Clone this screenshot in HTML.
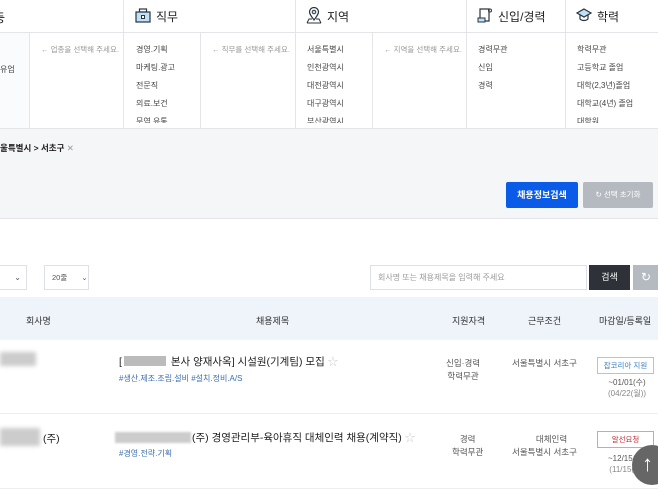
<!DOCTYPE html>
<html><head><meta charset="utf-8"><style>
*{margin:0;padding:0;box-sizing:border-box}
body{width:658px;height:493px;overflow:hidden;background:#fff;font-family:"Liberation Sans","Noto Sans CJK KR",sans-serif;color:#222;position:relative}
.a{position:absolute;white-space:nowrap}
.vl{position:absolute;width:1px;background:#e3e5e9}
.hl{position:absolute;height:1px;background:#e3e5e9}
.s{font-size:8px;color:#444}
.g{font-size:7.5px;color:#999}
.h{font-size:12px;color:#222}
.th{font-size:9px;color:#333}
.c{font-size:8.5px;color:#555;text-align:center}
.blur{position:absolute;background:#ccc;filter:blur(2px)}
.cut{height:7px;overflow:hidden}
</style></head><body>
<div class="hl" style="left:0;top:32px;width:658px"></div>
<div class="vl" style="left:123px;top:0;height:128px"></div>
<div class="vl" style="left:295px;top:0;height:128px"></div>
<div class="vl" style="left:466px;top:0;height:128px"></div>
<div class="vl" style="left:565px;top:0;height:128px"></div>
<div class="vl" style="left:29px;top:32px;height:96px"></div>
<div class="vl" style="left:200px;top:32px;height:96px"></div>
<div class="vl" style="left:372px;top:32px;height:96px"></div>
<div style="position:absolute;left:0;top:33px;width:29px;height:95px;background:#fafbfc"></div>
<div class="a h" style="left:-6px;top:9px">등</div>
<svg class="a" style="left:135px;top:8px" width="16" height="15" viewBox="0 0 16 15"><rect x="4.5" y="1" width="7" height="3" fill="none" stroke="#2a3340" stroke-width="1.2"/><rect x="1" y="4" width="14" height="10" fill="#bfe0f5" stroke="#2a3340" stroke-width="1.2"/><rect x="6.5" y="7.5" width="3" height="3" fill="#fff" stroke="#2a3340"/></svg>
<div class="a h" style="left:156px;top:8px">직무</div>
<svg class="a" style="left:306px;top:7px" width="16" height="17" viewBox="0 0 16 17"><path d="M8 13C5 9 3.5 7 3.5 5a4.5 4.5 0 0 1 9 0c0 2-1.5 4-4.5 8z" fill="none" stroke="#2a3340" stroke-width="1.2"/><circle cx="8" cy="5" r="1.8" fill="#bfe0f5" stroke="#2a3340"/><path d="M1 16l2-4h3M15 16l-2-4h-3M1 16h14" fill="none" stroke="#2a3340"/></svg>
<div class="a h" style="left:327px;top:8px">지역</div>
<svg class="a" style="left:477px;top:8px" width="16" height="15" viewBox="0 0 16 15"><path d="M3 1h9v12H3z" fill="#fff" stroke="#2a3340" stroke-width="1.2"/><path d="M1 10h7v4H1z" fill="#bfe0f5" stroke="#2a3340"/><circle cx="13" cy="2.5" r="1.5" fill="none" stroke="#2a3340"/></svg>
<div class="a h" style="left:498px;top:8px">신입/경력</div>
<svg class="a" style="left:576px;top:8px" width="16" height="15" viewBox="0 0 16 15"><path d="M8 1L15 5 8 9 1 5z" fill="#bfe0f5" stroke="#2a3340" stroke-width="1.2"/><path d="M4 7v4c2 2 6 2 8 0V7" fill="none" stroke="#2a3340" stroke-width="1.2"/></svg>
<div class="a h" style="left:597px;top:8px">학력</div>
<div class="a s" style="left:0;top:64px">유업</div>
<div class="a g" style="left:41px;top:44px">← 업종을 선택해 주세요.</div>
<div class="a s" style="left:136px;top:44px">경영.기획</div>
<div class="a s" style="left:136px;top:62px">마케팅.광고</div>
<div class="a s" style="left:136px;top:80px">전문직</div>
<div class="a s" style="left:136px;top:98px">의료.보건</div>
<div class="a s cut" style="left:136px;top:116px">무역.유통</div>
<div class="a g" style="left:212px;top:44px">← 직무를 선택해 주세요.</div>
<div class="a s" style="left:307px;top:44px">서울특별시</div>
<div class="a s" style="left:307px;top:62px">인천광역시</div>
<div class="a s" style="left:307px;top:80px">대전광역시</div>
<div class="a s" style="left:307px;top:98px">대구광역시</div>
<div class="a s cut" style="left:307px;top:116px">부산광역시</div>
<div class="a g" style="left:384px;top:44px">← 지역을 선택해 주세요.</div>
<div class="a s" style="left:478px;top:44px">경력무관</div>
<div class="a s" style="left:478px;top:62px">신입</div>
<div class="a s" style="left:478px;top:80px">경력</div>
<div class="a s" style="left:577px;top:44px">학력무관</div>
<div class="a s" style="left:577px;top:62px">고등학교 졸업</div>
<div class="a s" style="left:577px;top:80px">대학(2,3년)졸업</div>
<div class="a s" style="left:577px;top:98px">대학교(4년) 졸업</div>
<div class="a s cut" style="left:577px;top:116px">대학원</div>
<div style="position:absolute;left:0;top:128px;width:658px;height:91px;background:#f5f6f8;border-top:1px solid #e3e5e9;border-bottom:1px solid #e3e5e9"></div>
<div class="a" style="left:0;top:142px;font-size:8.5px;font-weight:bold;color:#222">울특별시 &gt; 서초구 <span style="font-weight:normal;color:#999">✕</span></div>
<div class="a" style="left:506px;top:182px;width:72px;height:26px;background:#0a5ce8;border-radius:2px;color:#fff;font-size:9px;font-weight:bold;text-align:center;line-height:26px">채용정보검색</div>
<div class="a" style="left:583px;top:182px;width:70px;height:26px;background:#b5b9c0;border-radius:2px;color:#fff;font-size:7.5px;text-align:center;line-height:26px">↻ 선택 초기화</div>
<div class="a" style="left:-2px;top:265px;width:29px;height:25px;border:1px solid #dde0e4;font-size:8px;line-height:23px;text-align:right;padding-right:5px;color:#555">⌄</div>
<div class="a" style="left:44px;top:265px;width:45px;height:25px;border:1px solid #dde0e4;font-size:7.5px;line-height:23px;padding-left:7px;color:#555">20줄 <span style="margin-left:12px">⌄</span></div>
<div class="a" style="left:370px;top:265px;width:217px;height:25px;border:1px solid #dde0e4;font-size:8px;line-height:23px;padding-left:7px;color:#999">회사명 또는 채용제목을 입력해 주세요</div>
<div class="a" style="left:589px;top:265px;width:41px;height:25px;background:#2e3238;color:#fff;font-size:9px;text-align:center;line-height:25px">검색</div>
<div class="a" style="left:633px;top:265px;width:25px;height:25px;background:#b5b9c0;color:#fff;font-size:12px;line-height:25px;padding-left:8px">↻</div>
<div style="position:absolute;left:0;top:297px;width:658px;height:43px;background:#eff3fa"></div>
<div class="a th" style="left:26px;top:314px">회사명</div>
<div class="a th" style="left:256px;top:314px">채용제목</div>
<div class="a th" style="left:452px;top:314px">지원자격</div>
<div class="a th" style="left:528px;top:314px">근무조건</div>
<div class="a th" style="left:599px;top:314px">마감일/등록일</div>
<div class="hl" style="left:0;top:413px;width:658px;background:#eceef1"></div>
<div class="hl" style="left:0;top:488px;width:658px;background:#eceef1"></div>
<div class="blur" style="left:0;top:352px;width:36px;height:14px"></div>
<div class="a" style="left:119px;top:354px;font-size:10.5px;color:#222">[<span style="display:inline-block;width:42px;height:10px;background:#bbb;vertical-align:-1px;margin:0 2px"></span> 본사 양재사옥] 시설원(기계팀) 모집 <span style="color:#ccc">☆</span></div>
<div class="a" style="left:119px;top:373px;font-size:8px;color:#3a6fb0">#생산.제조.조립.설비 #설치.정비.A/S</div>
<div class="a c" style="left:446px;top:357px;line-height:13px">신입·경력<br>학력무관</div>
<div class="a c" style="left:512px;top:357px">서울특별시 서초구</div>
<div class="a" style="left:597px;top:357px;width:57px;height:17px;border:1px solid #a8c7e0;font-size:7.5px;color:#3a7fc0;text-align:center;line-height:15px">잡코리아 지원</div>
<div class="a c" style="left:608px;top:377px;font-size:8px;line-height:11px">~01/01(수)<br><span style="color:#888">(04/22(월))</span></div>
<div class="blur" style="left:0;top:428px;width:40px;height:18px"></div>
<div class="a" style="left:43px;top:431px;font-size:10.5px">(주)</div>
<div class="blur" style="left:115px;top:432px;width:76px;height:11px;filter:blur(1px)"></div>
<div class="a" style="left:192px;top:430px;font-size:10.5px;color:#222">(주) 경영관리부-육아휴직 대체인력 채용(계약직) <span style="color:#ccc">☆</span></div>
<div class="a" style="left:119px;top:448px;font-size:8px;color:#3a6fb0">#경영.전략.기획</div>
<div class="a c" style="left:452px;top:433px;line-height:13px">경력<br>학력무관</div>
<div class="a c" style="left:512px;top:433px;line-height:13px">&nbsp;&nbsp;&nbsp;&nbsp;&nbsp;&nbsp;대체인력<br>서울특별시 서초구</div>
<div class="a" style="left:597px;top:431px;width:57px;height:17px;border:1px solid #d8a0a8;font-size:7.5px;color:#c0303a;text-align:center;line-height:15px">알선요청</div>
<div class="a c" style="left:608px;top:453px;font-size:8px;line-height:11px">~12/15(<br><span style="color:#888">(11/15(</span></div>
<div class="a" style="left:632px;top:445px;width:40px;height:40px;border-radius:50%;background:#666;color:#fff;font-size:22px;line-height:38px;padding-left:10px">↑</div>
</body></html>
